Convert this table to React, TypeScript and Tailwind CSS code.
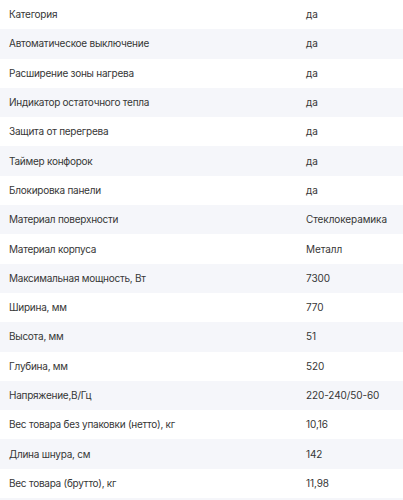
const specs: [string, string][] = [
  ['Категория', 'да'],
  ['Автоматическое выключение', 'да'],
  ['Расширение зоны нагрева', 'да'],
  ['Индикатор остаточного тепла', 'да'],
  ['Защита от перегрева', 'да'],
  ['Таймер конфорок', 'да'],
  ['Блокировка панели', 'да'],
  ['Материал поверхности', 'Стеклокерамика'],
  ['Материал корпуса', 'Металл'],
  ['Максимальная мощность, Вт', '7300'],
  ['Ширина, мм', '770'],
  ['Высота, мм', '51'],
  ['Глубина, мм', '520'],
  ['Напряжение,В/Гц', '220-240/50-60'],
  ['Вес товара без упаковки (нетто), кг', '10,16'],
  ['Длина шнура, см', '142'],
  ['Вес товара (брутто), кг', '11,98'],
  ['', ''],
];

export default function App() {
  return (
    <div className="w-[403px] h-[500px] overflow-hidden bg-white font-['Inter',sans-serif] text-[10px] text-[#363636]">
      {specs.map(([name, value], i) => (
        <div
          key={i}
          className={`flex items-center h-[29.3px] ${i % 2 === 1 ? 'bg-[#f5f6fa]' : 'bg-white'}`}
        >
          <div className="w-[306px] pl-[9px] tracking-[-0.25px]">{name}</div>
          <div className="flex-1 tracking-[-0.1px]">{value}</div>
        </div>
      ))}
    </div>
  );
}
